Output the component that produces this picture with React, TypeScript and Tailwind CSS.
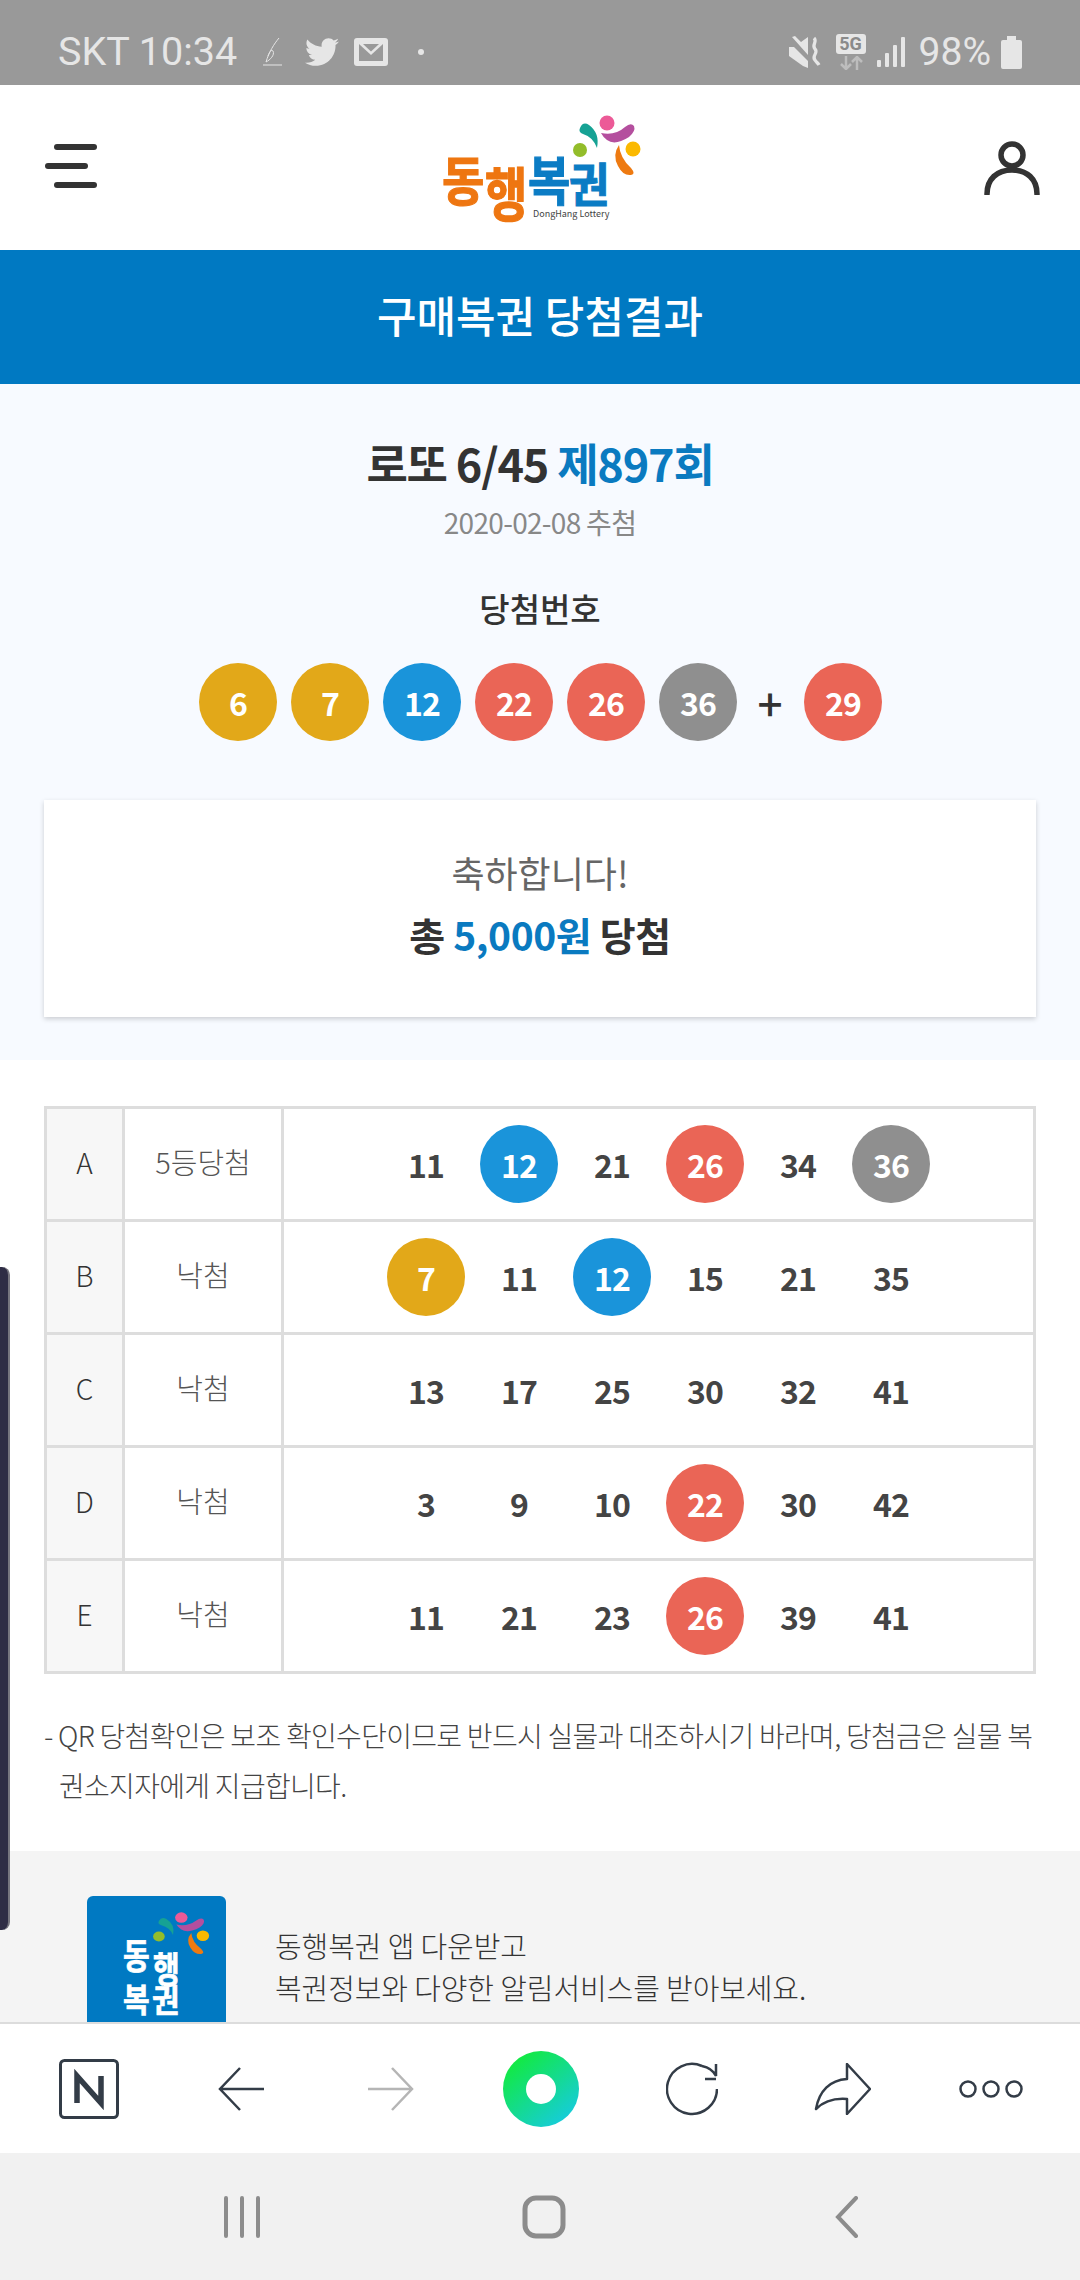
import { FaTwitter } from "react-icons/fa";

type BallColor = "yellow" | "blue" | "red" | "gray";

const ballClass: Record<BallColor, string> = {
  yellow: "bg-[#e2a819]",
  blue: "bg-[#1a94da]",
  red: "bg-[#ea6556]",
  gray: "bg-[#8f8f8f]",
};

function colorOf(n: number): BallColor {
  if (n <= 10) return "yellow";
  if (n <= 20) return "blue";
  if (n <= 30) return "red";
  return "gray";
}

function Ball({ n }: { n: number }) {
  return (
    <span
      className={`flex h-[78px] w-[78px] items-center justify-center rounded-full text-[32px] font-bold tracking-[-1px] text-white ${ballClass[colorOf(n)]}`}
    >
      {n}
    </span>
  );
}

const rows = [
  { key: "A", result: "5등당첨", nums: [11, 12, 21, 26, 34, 36], hit: [12, 26, 36] },
  { key: "B", result: "낙첨", nums: [7, 11, 12, 15, 21, 35], hit: [7, 12] },
  { key: "C", result: "낙첨", nums: [13, 17, 25, 30, 32, 41], hit: [] },
  { key: "D", result: "낙첨", nums: [3, 9, 10, 22, 30, 42], hit: [22] },
  { key: "E", result: "낙첨", nums: [11, 21, 23, 26, 39, 41], hit: [26] },
];

function Swooshes() {
  return (
    <>
      <circle cx="604" cy="123" r="7.5" fill="#ec5a97" />
      <circle cx="577" cy="150" r="7" fill="#93bd2a" />
      <circle cx="630" cy="149" r="7.5" fill="#fbb900" />
      <path d="M577 128Q580 121 586 125Q597 133 594 148Q590 137 580 134Q575 132 577 128Z" fill="#16a294" />
      <path d="M598 133Q612 136 622 127Q628 122 631 126Q633 131 626 137Q612 146 604 140Q600 137 598 133Z" fill="#b44f9e" />
      <path d="M616 145Q617 158 628 168Q633 174 628 175Q620 176 615 166Q609 155 616 145Z" fill="#ee7a11" />
    </>
  );
}

function Logo() {
  return (
    <svg className="overflow-visible" width="200" height="115" viewBox="440 110 200 115">
      <Swooshes />
      <g fontWeight="700" strokeWidth="1">
        <text transform="translate(439 201) scale(1 1.15)" fontSize="46" fill="#ee7611" stroke="#ee7611">동</text>
        <text transform="translate(482 216) scale(1 1.25)" fontSize="46" fill="#ee7611" stroke="#ee7611">행</text>
        <text transform="translate(525 201) scale(1 1.15)" fontSize="46" fill="#0b7cc4" stroke="#0b7cc4">복</text>
        <text transform="translate(566 202) scale(1 1.05)" fontSize="44" fill="#0b7cc4" stroke="#0b7cc4">권</text>
      </g>
      <text x="530" y="217" fontSize="9" fill="#444">DongHang Lottery</text>
    </svg>
  );
}

function AppIcon() {
  return (
    <div className="h-[160px] w-[139px] shrink-0 rounded-t-[6px] bg-[#0079c2]">
      <svg width="139" height="160" viewBox="87 1896 139 160">
        <g transform="translate(-320 1831.5) scale(0.83 0.7)">
          <Swooshes />
        </g>
        <g fontWeight="700" fill="#fff" stroke="#fff" strokeWidth="0.6">
          <text transform="translate(123 1969) scale(1 1.2)" fontSize="29">동</text>
          <text transform="translate(153 1983) scale(1 1.25)" fontSize="29">행</text>
          <text transform="translate(123 2012) scale(1 1.15)" fontSize="29">복</text>
          <text transform="translate(152 2012) scale(1 1.05)" fontSize="30">권</text>
        </g>
      </svg>
    </div>
  );
}

function StatusBar() {
  return (
    <div className="flex h-[85px] shrink-0 items-start justify-between bg-[#999999] pl-[58px] pr-[58px] pt-[30px] font-['Roboto',sans-serif] text-[#e6e6e6]">
      <div className="flex items-center">
        <span className="text-[39.5px] leading-[44px]">SKT 10:34</span>
        <svg className="ml-[25px]" width="20" height="30" viewBox="0 0 20 30" fill="none" stroke="#e6e6e6" strokeWidth="1">
          <path d="M17 1C12 7 7 15 4 25C8 23 13 18 11 14C9 12 7 16 6 19M1 28H20" />
        </svg>
        <FaTwitter className="ml-[23px] h-[34px] w-[34px]" />
        <svg className="ml-[15px]" width="34" height="28" viewBox="0 0 34 28">
          <rect width="34" height="28" rx="3" fill="#e6e6e6" />
          <path d="M5 6H29V23H5Z" fill="#999" />
          <path d="M5 6H29L17 17Z" fill="#e6e6e6" />
          <path d="M9 6H25L17 13.5Z" fill="#999" />
        </svg>
        <span className="ml-[30px] h-[6px] w-[6px] rounded-full bg-[#e6e6e6]" />
      </div>
      <div className="flex items-center">
        <svg width="32" height="32" viewBox="0 0 32 32" fill="#e6e6e6">
          <path d="M0 11H5L19 25V32L14 30L0 20Z" />
          <path d="M3 1L19 19L19 1L12 6L6 0Z" />
          <path d="M25 2C29 6 22 9 26 13C30 17 22 20 26 24C27 26 29 27 30 29" fill="none" stroke="#e6e6e6" strokeWidth="3.2" />
        </svg>
        <div className="ml-[15px] flex flex-col items-center">
          <span className="flex h-[20px] w-[30px] items-center justify-center rounded-[3px] bg-[#e6e6e6] text-[18px] font-bold leading-none text-[#8a8a8a]">5G</span>
          <svg className="mt-[2px]" width="24" height="14" viewBox="0 0 24 14" fill="none" stroke="#bdbdbd" strokeWidth="2.5">
            <path d="M7 0V13M2 8L7 13L12 8M18 14V1M13 6L18 1L23 6" />
          </svg>
        </div>
        <svg className="ml-[11px]" width="28" height="30" viewBox="0 0 28 30" fill="#e6e6e6">
          <rect x="0" y="23" width="4" height="7" rx="1" />
          <rect x="8" y="16" width="4" height="14" rx="1" />
          <rect x="16" y="8" width="4" height="22" rx="1" />
          <rect x="24" y="0" width="4" height="30" rx="1" />
        </svg>
        <span className="ml-[14px] text-[39px] leading-[44px]">98%</span>
        <svg className="ml-[10px]" width="21" height="33" viewBox="0 0 21 33" fill="#e6e6e6">
          <path d="M6 0H15V4H19Q21 4 21 6V31Q21 33 19 33H2Q0 33 0 31V6Q0 4 2 4H6Z" />
        </svg>
      </div>
    </div>
  );
}

function Header() {
  return (
    <header className="grid h-[165px] shrink-0 grid-cols-[1fr_auto_1fr] items-center bg-white pl-[45px] pr-[40px]">
      <svg width="52" height="48" viewBox="0 0 52 48" fill="#333">
        <rect x="9" y="0" width="43" height="6" rx="3" />
        <rect x="0" y="19" width="43" height="6" rx="3" />
        <rect x="9" y="38" width="43" height="6" rx="3" />
      </svg>
      <Logo />
      <svg className="justify-self-end" width="56" height="54" viewBox="0 0 56 54" fill="none" stroke="#333" strokeWidth="5.5">
        <circle cx="28" cy="14" r="11" />
        <path d="M3 53C3 38 13 29 28 29C43 29 53 38 53 53" strokeLinecap="round" />
      </svg>
    </header>
  );
}

function Summary() {
  return (
    <section className="flex h-[676px] shrink-0 flex-col items-center bg-[#f7faff] pt-[52px]">
      <h2 className="text-[45px] font-bold leading-[54px] tracking-[-1.2px] text-[#333]">
        로또 6/45 <span className="text-[#0a7ac0]">제897회</span>
      </h2>
      <p className="mt-[12px] text-[28px] leading-[40px] tracking-[-0.7px] text-[#888]">2020-02-08 추첨</p>
      <p className="mt-[44px] text-[33px] font-medium leading-[44px] text-[#333]">당첨번호</p>
      <div className="mt-[33px] flex w-full items-center pl-[199px]">
        <div className="flex gap-[14px]">
          {[6, 7, 12, 22, 26, 36].map((n) => (
            <Ball key={n} n={n} />
          ))}
        </div>
        <span className="ml-[15px] w-[36px] text-center text-[44px] font-medium leading-none text-[#333]">+</span>
        <span className="ml-[16px]">
          <Ball n={29} />
        </span>
      </div>
      <div className="mt-[59px] flex h-[217px] w-[992px] flex-col items-center justify-center bg-white pb-[12px] shadow-[0_2px_5px_rgba(0,0,0,0.18)]">
        <p className="text-[36px] leading-[54px] text-[#666]">축하합니다!</p>
        <p className="mt-[8px] text-[39px] font-bold leading-[54px] tracking-[-0.4px] text-[#333]">
          총 <span className="text-[#0a7ac0]">5,000원</span> 당첨
        </p>
      </div>
    </section>
  );
}

function ResultTable() {
  return (
    <div className="ml-[44px] w-[992px] border-t-[3px] border-l-[3px] border-[#dddddd]">
      {rows.map((row) => (
        <div key={row.key} className="grid h-[113px] grid-cols-[78px_159px_1fr] border-b-[3px] border-[#dddddd]">
          <div className="flex items-center justify-center border-r-[3px] border-[#dddddd] bg-[#f7f7f7] pb-[4px] text-[28px] font-light text-[#333]">
            {row.key}
          </div>
          <div className="flex items-center justify-center border-r-[3px] border-[#dddddd] pb-[4px] text-[29px] font-light text-[#555]">
            {row.result}
          </div>
          <div className="flex items-center justify-center border-r-[3px] border-[#dddddd]">
            {row.nums.map((n) => (
              <span key={n} className="flex w-[93px] justify-center text-[32px] font-bold tracking-[-1px] text-[#444]">
                {row.hit.includes(n) ? <Ball n={n} /> : n}
              </span>
            ))}
          </div>
        </div>
      ))}
    </div>
  );
}

function Toolbar() {
  return (
    <nav className="flex h-[131px] shrink-0 items-center border-t-[2px] border-[#dcdcdc] bg-white">
      <svg className="ml-[59px]" width="60" height="60" viewBox="0 0 60 60" fill="none">
        <rect x="1.5" y="1.5" width="57" height="57" rx="4" stroke="#333c47" strokeWidth="3" />
        <path d="M18 44V17L42 44V17" stroke="#333c47" strokeWidth="5.5" />
      </svg>
      <svg className="ml-[99px]" width="46" height="44" viewBox="0 0 46 44" fill="none" stroke="#333c47" strokeWidth="2.5">
        <path d="M22 1L2 22L22 43M2 22H46" />
      </svg>
      <svg className="ml-[104px]" width="46" height="44" viewBox="0 0 46 44" fill="none" stroke="#b5b5b5" strokeWidth="2.5">
        <path d="M24 1L44 22L24 43M44 22H0" />
      </svg>
      <svg className="ml-[89px]" width="76" height="76" viewBox="0 0 76 76">
        <defs>
          <linearGradient id="naver-whale" x1="0.15" y1="0.1" x2="0.85" y2="0.95">
            <stop offset="0" stopColor="#12ea3f" />
            <stop offset="1" stopColor="#16cbe0" />
          </linearGradient>
        </defs>
        <circle cx="38" cy="38" r="38" fill="url(#naver-whale)" />
        <circle cx="38" cy="38" r="15" fill="#fff" />
      </svg>
      <svg className="ml-[87px]" width="52" height="54" viewBox="0 0 52 54" fill="none" stroke="#333c47" strokeWidth="2.5">
        <path d="M36 4A25 25 0 1 0 51 27M36 4Q46 6 50 14V2M50 17H39" />
      </svg>
      <svg className="ml-[96px]" width="57" height="52" viewBox="0 0 57 52" fill="none" stroke="#333c47" strokeWidth="2.5" strokeLinejoin="round">
        <path d="M33 1L56 26L33 51V36C20 35 10 38 2 46C5 28 16 17 33 16Z" />
      </svg>
      <svg className="ml-[88px]" width="64" height="18" viewBox="0 0 64 18" fill="none" stroke="#333c47" strokeWidth="2.5">
        <circle cx="9" cy="9" r="7.5" />
        <circle cx="32" cy="9" r="7.5" />
        <circle cx="55" cy="9" r="7.5" />
      </svg>
    </nav>
  );
}

function NavBar() {
  return (
    <div className="flex h-[127px] shrink-0 items-center bg-[#f1f1f1]">
      <svg className="ml-[223px]" width="38" height="42" viewBox="0 0 38 42" stroke="#8c8c8c" strokeWidth="4" strokeLinecap="round">
        <path d="M3 2V40M19 2V40M35 2V40" />
      </svg>
      <svg className="ml-[261px]" width="44" height="44" viewBox="0 0 44 44" fill="none" stroke="#8c8c8c" strokeWidth="5">
        <rect x="3" y="3" width="38" height="38" rx="11" />
      </svg>
      <svg className="ml-[269px]" width="24" height="42" viewBox="0 0 24 42" fill="none" stroke="#8c8c8c" strokeWidth="4" strokeLinecap="round">
        <path d="M21 2L3 21L21 40" />
      </svg>
    </div>
  );
}

export default function App() {
  return (
    <div className="relative flex h-[2280px] w-[1080px] flex-col overflow-hidden bg-white font-['Noto_Sans_CJK_KR',sans-serif]">
      <StatusBar />
      <Header />
      <div className="flex h-[134px] shrink-0 items-center justify-center bg-[#0079c2] pb-[5px] text-[43px] font-medium text-white">
        구매복권 당첨결과
      </div>
      <Summary />
      <main className="flex h-[791px] shrink-0 flex-col pt-[46px]">
        <ResultTable />
        <div className="ml-[44px] mt-[36px] whitespace-nowrap text-[28px] font-light leading-[50px] tracking-[-0.7px] text-[#444]">
          <p>- QR 당첨확인은 보조 확인수단이므로 반드시 실물과 대조하시기 바라며, 당첨금은 실물 복</p>
          <p className="pl-[15px]">권소지자에게 지급합니다.</p>
        </div>
      </main>
      <footer className="flex min-h-0 flex-1 items-start overflow-hidden bg-[#f4f4f4] pl-[87px] pt-[45px]">
        <AppIcon />
        <div className="ml-[49px] mt-[28px] text-[29px] font-light leading-[42px] tracking-[-0.1px] text-[#333]">
          <p>동행복권 앱 다운받고</p>
          <p>복권정보와 다양한 알림서비스를 받아보세요.</p>
        </div>
      </footer>
      <Toolbar />
      <NavBar />
      <div className="absolute left-0 top-[1267px] h-[663px] w-[10px] rounded-r-[8px] border-r-[2px] border-[#77767f] bg-[#2f2d45]" />
    </div>
  );
}
